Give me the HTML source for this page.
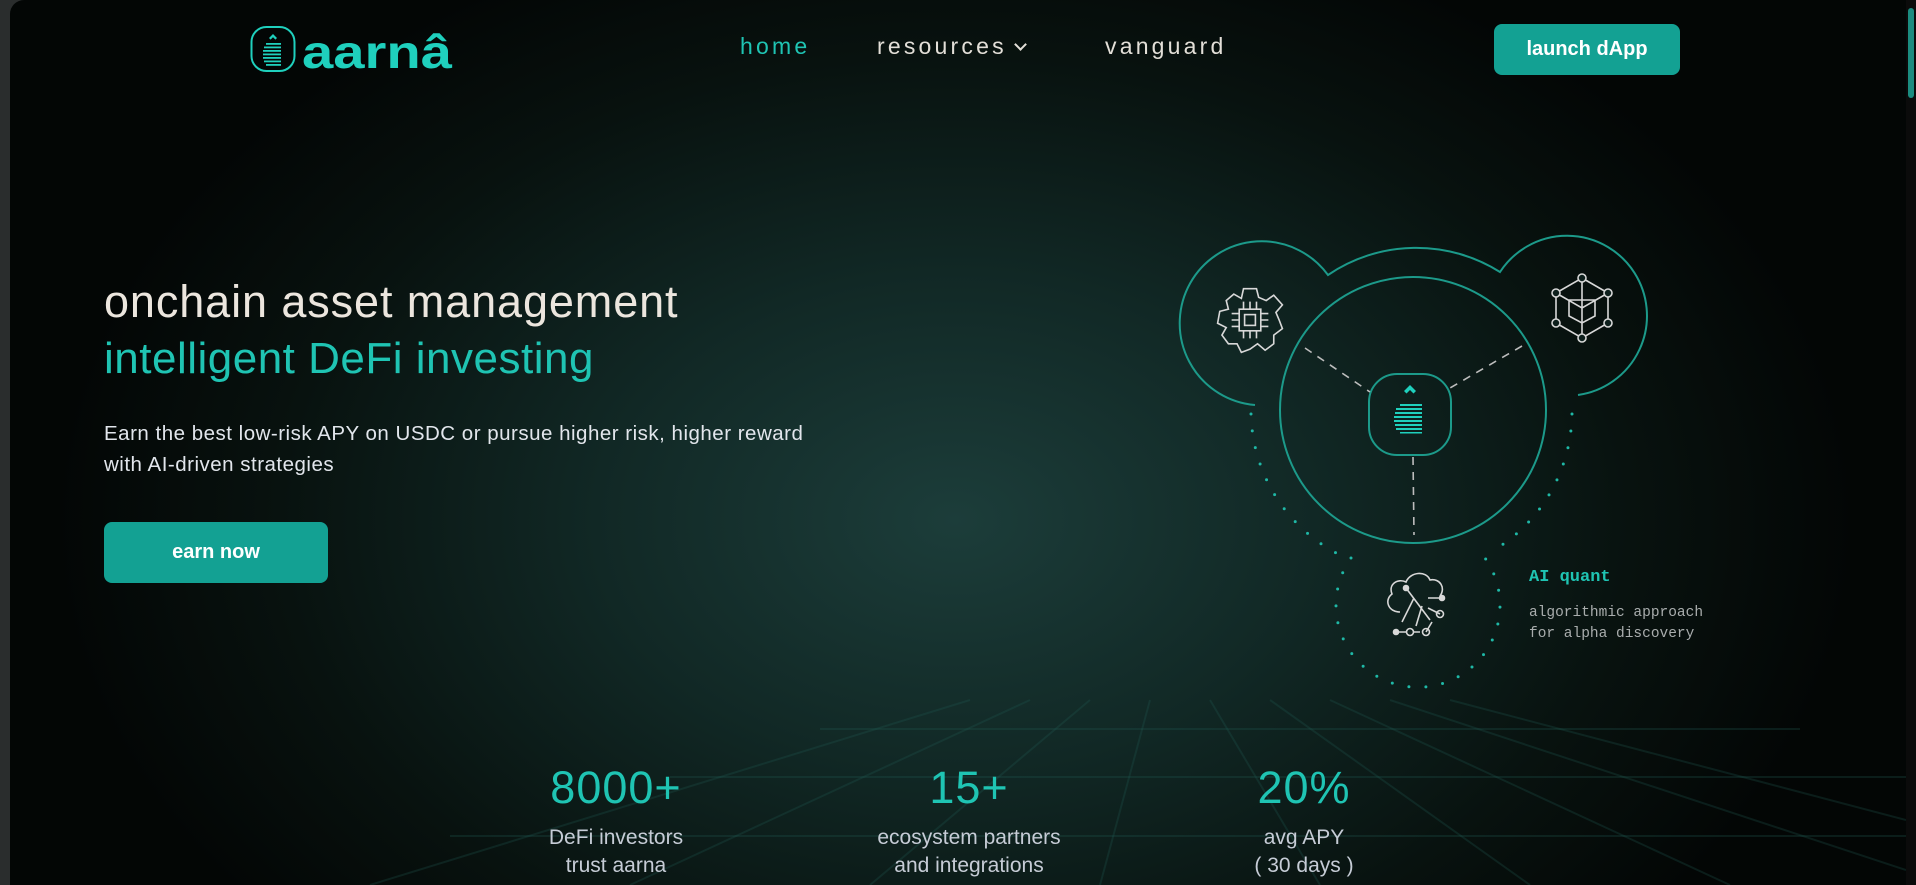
<!DOCTYPE html>
<html><head><meta charset="utf-8"><style>
*{margin:0;padding:0;box-sizing:border-box}
html,body{width:1916px;height:885px;overflow:hidden;background:#2a2d2d}
#page{position:absolute;left:10px;top:0;width:1896px;height:885px;border-top-left-radius:14px;overflow:hidden;
background:radial-gradient(ellipse 900px 620px at 945px 520px,#1c3d3a 0%,#112825 40%,#08120f 75%,#030605 100%);font-family:"Liberation Sans",sans-serif}
.abs{position:absolute;white-space:nowrap}
.nav{font-size:23px;letter-spacing:3.2px;color:#e3dfd8;top:33px}
.btn{background:#13a193;color:#fff;font-weight:bold;border-radius:8px;text-align:center}
.stat{position:absolute;text-align:center;width:300px}
.stat .n{font-size:45px;color:#1fc4b3;letter-spacing:1px}
.stat .l{font-size:21px;color:#c6ccd6;line-height:28px;margin-top:10px}
#sb{position:absolute;right:0;top:0;width:10px;height:885px;background:#0b0b0b}
#sb div{position:absolute;left:2px;top:8px;width:6px;height:90px;border-radius:3px;background:#1b8c80}
</style></head><body>
<div id="page">
<svg class="abs" style="left:0;top:0" width="1896" height="885">
 <g stroke="#1f5a51" stroke-opacity=".28" stroke-width="2" fill="none">
  <line x1="810" y1="729" x2="1790" y2="729"/>
  <line x1="660" y1="777" x2="1896" y2="777"/>
  <line x1="440" y1="836" x2="1896" y2="836"/>
  <line x1="960" y1="700" x2="360" y2="885"/>
  <line x1="1020" y1="700" x2="620" y2="885"/>
  <line x1="1080" y1="700" x2="860" y2="885"/>
  <line x1="1140" y1="700" x2="1090" y2="885"/>
  <line x1="1200" y1="700" x2="1310" y2="885"/>
  <line x1="1260" y1="700" x2="1520" y2="885"/>
  <line x1="1320" y1="700" x2="1720" y2="885"/>
  <line x1="1380" y1="700" x2="1896" y2="870"/>
  <line x1="1440" y1="700" x2="1896" y2="820"/>
 </g>
 <g fill="none" stroke="#1c9a8a" stroke-width="2">
  <path d="M1245 405 A82 82 0 1 1 1318 275 A157 157 0 0 1 1490 272 A80 80 0 1 1 1568 395"/>
  <circle cx="1403" cy="410" r="133"/>
  <rect x="1359" y="374" width="82" height="81" rx="28"/>
 </g>
 <g stroke="#bdbdbd" stroke-width="1.6" stroke-dasharray="8 7" fill="none">
  <line x1="1295" y1="348" x2="1360" y2="392"/>
  <line x1="1512" y1="346" x2="1440" y2="388"/>
  <line x1="1403" y1="457" x2="1404" y2="535"/>
 </g>
 <g stroke="#1fb8a6" stroke-width="3" stroke-linecap="round" stroke-dasharray="0 17" fill="none">
  <path d="M1241 414 A162 162 0 0 0 1332 556"/>
  <path d="M1562 414 A162 162 0 0 1 1489 547"/>
  <path d="M1341 558 A82 82 0 1 0 1475 558"/>
 </g>
 <g fill="#1fd0bd">
  <path d="M1394 391 l6 -6 l6 6 l-2.5 2.5 l-3.5 -3.5 l-3.5 3.5z"/>
  <g><rect x="1390" y="404" width="22" height="2"/><rect x="1386" y="408" width="26" height="2"/><rect x="1385" y="412" width="27" height="2"/><rect x="1384" y="416" width="28" height="2"/><rect x="1384" y="420" width="28" height="2"/><rect x="1385" y="424" width="27" height="2"/><rect x="1386" y="428" width="26" height="2"/><rect x="1390" y="432" width="22" height="1.5"/></g>
 </g>
 <g transform="translate(1240,320) scale(1.08)" fill="none" stroke="#d8d8d8" stroke-width="1.5">
  <path d="M-6 -29 L6 -29 L8 -21 L15 -18 L22 -23 L30 -14 L24 -7 L27 0 L30 8 L22 14 L22 22 L14 28 L7 22 L0 27 L-8 30 L-12 22 L-20 22 L-26 14 L-22 7 L-30 3 L-28 -8 L-20 -10 L-22 -18 L-15 -24 L-8 -20 Z"/>
  <rect x="-10" y="-10" width="20" height="20"/><rect x="-5" y="-5" width="10" height="10"/>
  <path d="M-6 -10v-7M0 -10v-7M6 -10v-7M-6 10v7M0 10v7M6 10v7M-10 -6h-7M-10 0h-7M-10 6h-7M10 -6h7M10 0h7M10 6h7"/>
 </g>
 <g transform="translate(1572,308)" fill="none" stroke="#d8d8d8" stroke-width="1.6">
  <path d="M0 -30 L26 -15 L26 15 L0 30 L-26 15 L-26 -15 Z M0 -30 V30 M-26 -15 L0 0 L26 -15 M-13 -8 L13 -8 L13 8 L0 15 L-13 8 Z"/>
  <g fill="#0d1f1c"><circle cx="0" cy="-30" r="4"/><circle cx="26" cy="-15" r="4"/><circle cx="26" cy="15" r="4"/><circle cx="0" cy="30" r="4"/><circle cx="-26" cy="15" r="4"/><circle cx="-26" cy="-15" r="4"/></g>
 </g>
 <g transform="translate(1408,600)" fill="none" stroke="#d8d8d8" stroke-width="1.6">
  <path d="M-18 12 C-30 12 -34 0 -26 -6 C-30 -16 -20 -22 -12 -18 C-8 -28 8 -30 12 -20 C22 -22 28 -12 22 -4"/>
  <path d="M-12 -12 L12 20 M-4 -2 L-16 22 M4 6 L-2 26 M10 -2 L24 -2 M10 8 L22 14 M14 22 L8 32 M-20 32 h8 M-4 32 h6"/>
  <g fill="#d8d8d8"><circle cx="-12" cy="-12" r="2.5"/><circle cx="24" cy="-2" r="2.5"/><circle cx="-22" cy="32" r="2.5"/></g>
  <circle cx="22" cy="14" r="3.5"/><circle cx="-8" cy="32" r="3.5"/><circle cx="8" cy="32" r="3.5"/>
 </g>
</svg>
<svg class="abs" style="left:240px;top:25px" width="220" height="50">
 <rect x="1.5" y="2" width="43" height="44" rx="15" fill="none" stroke="#1fd0bd" stroke-width="2"/>
 <path d="M19 13 l4 -4 l4 4 l-1.6 1.6 l-2.4 -2.4 l-2.4 2.4z" fill="#1fd0bd"/>
 <g fill="#1fd0bd"><rect x="16" y="18" width="15" height="1.8"/><rect x="14" y="21.5" width="17" height="1.8"/><rect x="13" y="25" width="18" height="1.8"/><rect x="13" y="28.5" width="18" height="1.8"/><rect x="13" y="32" width="18" height="1.8"/><rect x="14" y="35.5" width="17" height="1.8"/><rect x="16" y="39" width="15" height="1.8"/></g>
 <text x="52" y="43" font-family="Liberation Sans,sans-serif" font-weight="bold" font-size="46" fill="#1fd0bd" textLength="150" lengthAdjust="spacingAndGlyphs">aarnâ</text>
</svg>
<div class="abs nav" style="left:730px;color:#1fc4b3">home</div>
<div class="abs nav" style="left:867px">resources <span style="display:inline-block;width:9px;height:9px;border-right:2px solid #e3dfd8;border-bottom:2px solid #e3dfd8;transform:rotate(45deg);position:relative;top:-5px;margin-left:0px"></span></div>
<div class="abs nav" style="left:1095px">vanguard</div>
<div class="abs btn" style="left:1484px;top:24px;width:186px;height:51px;line-height:51px;font-size:20px">launch dApp</div>

<div class="abs" style="left:94px;top:276px;font-size:45px;color:#ece6de;letter-spacing:0.9px">onchain asset management</div>
<div class="abs" style="left:94px;top:334px;font-size:44px;color:#1fc4b3;letter-spacing:0.5px">intelligent DeFi investing</div>
<div class="abs" style="left:94px;top:418px;font-size:20.5px;line-height:31px;color:#e2e6ec;letter-spacing:0.5px">Earn the best low-risk APY on USDC or pursue higher risk, higher reward<br>with AI-driven strategies</div>
<div class="abs btn" style="left:94px;top:522px;width:224px;height:61px;line-height:61px;font-size:20px">earn now</div>

<div class="abs" style="left:1519px;top:568px;font-family:'Liberation Mono',monospace;font-weight:bold;font-size:17px;color:#1fc4b3">AI quant</div>
<div class="abs" style="left:1519px;top:603px;font-family:'Liberation Mono',monospace;font-size:14.5px;line-height:21px;color:#a9adad">algorithmic approach<br>for alpha discovery</div>

<div class="stat" style="left:456px;top:762px"><div class="n">8000+</div><div class="l">DeFi investors<br>trust aarna</div></div>
<div class="stat" style="left:809px;top:762px"><div class="n">15+</div><div class="l">ecosystem partners<br>and integrations</div></div>
<div class="stat" style="left:1144px;top:762px"><div class="n">20%</div><div class="l">avg APY<br>( 30 days )</div></div>
</div>
<div id="sb"><div></div></div>
</body></html>
